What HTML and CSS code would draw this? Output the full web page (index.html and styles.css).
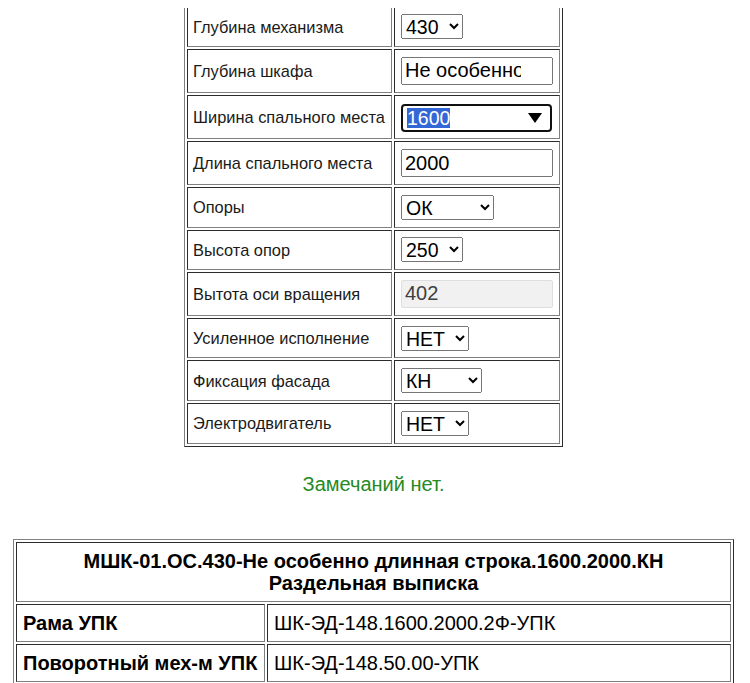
FILE: index.html
```html
<!DOCTYPE html>
<html lang="ru">
<head>
<meta charset="utf-8">
<title>Параметры</title>
<link rel="stylesheet" href="styles.css">
</head>
<body>
<table class="params">
  <tr>
    <td class="label">Модель</td>
    <td class="value"><select class="sel sel-430"><option>МШК-01</option></select></td>
  </tr>
  <tr>
    <td class="label">Глубина механизма</td>
    <td class="value"><select class="sel sel-430"><option>430</option></select></td>
  </tr>
  <tr>
    <td class="label">Глубина шкафа</td>
    <td class="value"><input class="txt txt-long" type="text" value="Не особенно длинная строка"></td>
  </tr>
  <tr>
    <td class="label">Ширина спального места</td>
    <td class="value">
      <span class="sel-open"><span class="hl">1600</span><svg class="tri" width="14" height="10" viewBox="0 0 14 10"><polygon points="0,0 14,0 7,10" fill="#000"/></svg></span>
    </td>
  </tr>
  <tr>
    <td class="label">Длина спального места</td>
    <td class="value"><input class="txt" type="text" value="2000"></td>
  </tr>
  <tr>
    <td class="label">Опоры</td>
    <td class="value"><select class="sel sel-ok"><option>ОК</option></select></td>
  </tr>
  <tr>
    <td class="label">Высота опор</td>
    <td class="value"><select class="sel sel-430"><option>250</option></select></td>
  </tr>
  <tr>
    <td class="label">Вытота оси вращения</td>
    <td class="value"><input class="txt" type="text" value="402" disabled></td>
  </tr>
  <tr>
    <td class="label">Усиленное исполнение</td>
    <td class="value"><select class="sel sel-net"><option>НЕТ</option></select></td>
  </tr>
  <tr>
    <td class="label">Фиксация фасада</td>
    <td class="value"><select class="sel sel-kn"><option>КН</option></select></td>
  </tr>
  <tr>
    <td class="label">Электродвигатель</td>
    <td class="value"><select class="sel sel-net"><option>НЕТ</option></select></td>
  </tr>
</table>

<p class="note">Замечаний нет.</p>

<table class="spec">
  <tr>
    <th colspan="2">МШК-01.ОС.430-Не особенно длинная строка.1600.2000.КН<br>Раздельная выписка</th>
  </tr>
  <tr>
    <td class="name">Рама УПК</td>
    <td>ШК-ЭД-148.1600.2000.2Ф-УПК</td>
  </tr>
  <tr>
    <td class="name">Поворотный мех-м УПК</td>
    <td>ШК-ЭД-148.50.00-УПК</td>
  </tr>
  <tr>
    <td class="name">Опоры</td>
    <td>ОК-250</td>
  </tr>
</table>
</body>
</html>
```
FILE: styles.css
```css
html, body {
  background: #fff;
}

body {
  margin: 8px 11px 8px 8px;
  font-family: "Liberation Sans", Arial, sans-serif;
  color: #000;
}

.params {
  width: 379px;
  margin: -47px auto 0;
  border: 1px outset grey;
  border-spacing: 2px;
}

.params td {
  border: 1px inset grey;
  padding: 6.8px 5px;
  font-size: 16.4px;
  line-height: 18px;
}

.params td.label {
  width: 193px;
  color: #1a1a1a;
}

.params td.value {
  padding-left: 6px;
}

.sel {
  display: block;
  font-family: "Liberation Sans", Arial, sans-serif;
  font-size: 19.5px;
  height: 25px;
  box-sizing: border-box;
  color: #000;
  margin: 0;
}

.sel-430 { width: 62px; }
.sel-ok  { width: 93px; }
.sel-net { width: 68px; }
.sel-kn  { width: 81px; }

.txt {
  display: block;
  font-family: "Liberation Sans", Arial, sans-serif;
  font-size: 20px;
  width: 152px;
  height: 28px;
  box-sizing: border-box;
  margin: 0;
  color: #000;
}

.txt-long {
  padding-right: 30px;
}

.txt:disabled {
  color: #3f3f3f;
  background: #f1f1f1;
  border: 1px solid #dedede;
  border-radius: 2px;
  padding-left: 3px;
}

.sel-open {
  display: flex;
  align-items: center;
  justify-content: space-between;
  width: 151px;
  height: 28px;
  margin-top: 1px;
  box-sizing: border-box;
  border: 2px solid #101010;
  border-radius: 4px;
  padding: 0 8px 0 4px;
  font-size: 19.5px;
  line-height: 20px;
}

.hl {
  background: #3367d6;
  color: #fff;
}

.tri {
  display: block;
}

.note {
  margin: 26px 0 43px;
  text-align: center;
  color: #258a25;
  font-size: 20px;
  line-height: 23px;
}

.spec {
  width: 721px;
  margin: 0 auto;
  border: 1px outset grey;
  border-spacing: 2px;
  font-size: 20px;
  line-height: 22px;
}

.spec th,
.spec td {
  border: 1px inset grey;
  padding: 7px 6px;
  text-align: left;
}

.spec th {
  text-align: center;
  font-weight: bold;
}

.spec td.name {
  width: 235px;
  font-weight: bold;
}
```
